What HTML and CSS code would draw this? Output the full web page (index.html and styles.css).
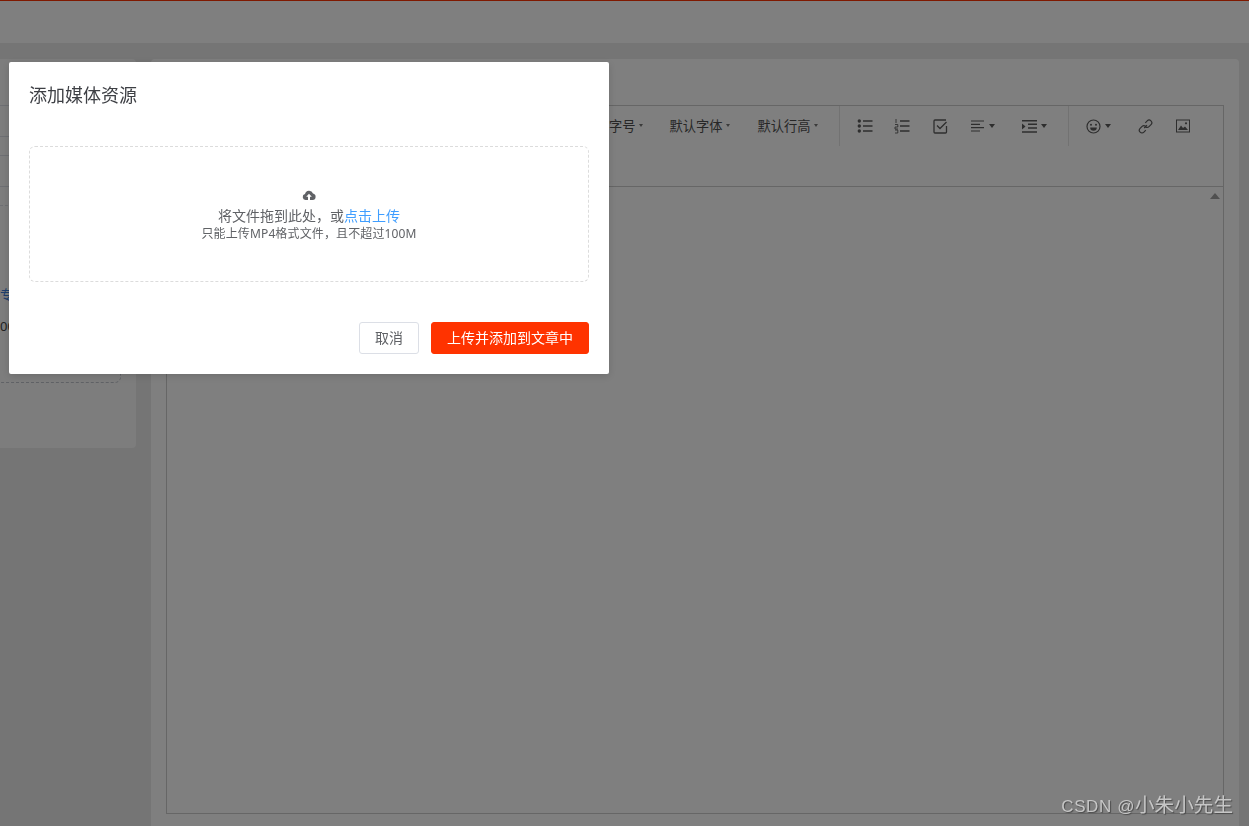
FILE: index.html
```html
<!DOCTYPE html>
<html lang="zh">
<head>
<meta charset="utf-8">
<title>添加媒体资源</title>
<link rel="stylesheet" href="styles.css">
</head>
<body>
<div class="page">
  <header class="topbar"></header>
  <div class="content">
    <aside class="side">
      <div class="field-line line-a"></div>
      <div class="field-line line-b"></div>
      <div class="field-line line-c"></div>
      <div class="field-line line-d"></div>
      <div class="field-dash"></div>
      <div class="side-link">专</div>
      <div class="side-num">00</div>
      <div class="side-drop"></div>
    </aside>
    <main class="main">
      <div class="editor">
        <div class="toolbar">
          <div class="tool-group text-tools">
            <span class="tool-text">字号<i class="caret-s"></i></span>
            <span class="tool-text">默认字体<i class="caret-s"></i></span>
            <span class="tool-text">默认行高<i class="caret-s"></i></span>
          </div>
          <div class="tool-group list-tools">
            <svg class="ico i-ul" width="16" height="16" viewBox="0 0 16 16"><circle cx="2.300" cy="3" r="1.700" fill="#5c5c5c"/><circle cx="2.300" cy="8" r="1.700" fill="#5c5c5c"/><circle cx="2.300" cy="13" r="1.700" fill="#5c5c5c"/><path d="M6 3h9.500M6 8h9.500M6 13h9.500" stroke="#5c5c5c" stroke-width="1.600"/></svg>
            <svg class="ico i-ol" width="16" height="16" viewBox="0 0 16 16"><path d="M6 3h9.500M6 8h9.500M6 13h9.500" stroke="#5c5c5c" stroke-width="1.500"/><path d="M2 1v4M1 6.500h2.800V9H1v2h3M1 12h2.800v3H1" fill="none" stroke="#5c5c5c" stroke-width=".9"/></svg>
            <svg class="ico i-check" width="15" height="15" viewBox="0 0 15 15"><path d="M13.500 7V13a1 1 0 0 1-1 1H2a1 1 0 0 1-1-1V2a1 1 0 0 1 1-1h11" fill="none" stroke="#5c5c5c" stroke-width="1.300"/><path d="M4 6.500l3 3 6.500-6.500" fill="none" stroke="#5c5c5c" stroke-width="1.300"/></svg>
            <span class="ico-wrap i-align"><svg width="14" height="12" viewBox="0 0 14 12"><path d="M0 1h13M0 4.300h9M0 7.600h13M0 11h9" stroke="#5c5c5c" stroke-width="1.200"/></svg><i class="caret"></i></span>
            <span class="ico-wrap i-indent"><svg width="15" height="13" viewBox="0 0 15 13"><path d="M0 .8h15M6 4.300h9M6 8h9M0 12h15" stroke="#5c5c5c" stroke-width="1.500"/><path d="M0 3.500l3.500 3-3.500 3z" fill="#5c5c5c"/></svg><i class="caret"></i></span>
          </div>
          <div class="tool-group media-tools">
            <span class="ico-wrap i-emoji"><svg width="15" height="15" viewBox="0 0 15 15"><circle cx="7.500" cy="7.500" r="6.500" fill="none" stroke="#5c5c5c" stroke-width="1.200"/><circle cx="5" cy="5.800" r="1" fill="#5c5c5c"/><circle cx="10" cy="5.800" r="1" fill="#5c5c5c"/><path d="M4.200 8.500h6.600a3.300 3.300 0 0 1-6.600 0z" fill="#5c5c5c"/></svg><i class="caret"></i></span>
            <svg class="ico i-link" width="15" height="15" viewBox="0 0 15 15"><path d="M6.200 9L9 6.200M7.300 3.800l1.900-1.900a2.600 2.600 0 0 1 3.800 3.700l-2 2a2.600 2.600 0 0 1-3.300.3M7.800 11.200l-1.900 1.900a2.600 2.600 0 0 1-3.800-3.700l2-2a2.600 2.600 0 0 1 3.300-.3" fill="none" stroke="#5c5c5c" stroke-width="1.200"/></svg>
            <svg class="ico i-img" width="14" height="14" viewBox="0 0 14 14"><rect x=".5" y="1" width="13" height="12" fill="none" stroke="#5c5c5c"/><path d="M2 11l3-4.500 2 2.500 2-1.500 3 3.500z" fill="#5c5c5c"/><circle cx="10" cy="4.300" r="1.100" fill="#5c5c5c"/></svg>
          </div>
        </div>
        <div class="edit-area"><i class="scroll-up"></i></div>
      </div>
    </main>
  </div>
</div>
<div class="overlay"></div>
<section class="dialog">
  <h2 class="dialog-title">添加媒体资源</h2>
  <div class="dropzone">
    <svg class="cloud" width="14" height="12" viewBox="0 0 14 12"><path d="M3.500 11A3 3 0 0 1 3 5.100 4.200 4.200 0 0 1 11 4.500 3.300 3.300 0 0 1 10.700 11H8V7.800h1.800L7 4.800 4.200 7.800H6V11z" fill="#606266"/></svg>
    <div class="drop-text">将文件拖到此处，或<em>点击上传</em></div>
    <div class="drop-tip">只能上传MP4格式文件，且不超过100M</div>
  </div>
  <div class="dialog-footer">
    <button class="btn btn-cancel">取消</button>
    <button class="btn btn-primary">上传并添加到文章中</button>
  </div>
</section>
<div class="watermark"><span class="wm-latin">CSDN @</span>小朱小先生</div>
</body>
</html>
```
FILE: styles.css
```css
* { box-sizing: border-box; }
html, body { margin: 0; height: 100%; overflow: hidden; }
body { font-family: "Noto Sans", "Noto Sans CJK SC", sans-serif; color: #303133; background: #eeeeee; }
.page { height: 826px; display: flex; flex-direction: column; background: #eaeaea; position: relative; }
.topbar { height: 43px; flex: none; background: #ffffff; border-top: 1px solid #ff3300; }
.content { flex: 1; display: flex; align-items: flex-start; padding-top: 16px; gap: 15px; }
.side { width: 136px; height: 389px; background: #fafafa; border-radius: 0 4px 4px 0; position: relative; flex: none; }
.field-line { position: absolute; left: 0; right: 0; height: 1px; background: #dcdfe6; }
.line-a { top: 46px; }
.line-b { top: 77px; }
.line-c { top: 96px; }
.line-d { top: 127px; }
.field-dash { position: absolute; left: 0; right: 0; top: 146px; border-top: 1px dashed #dcdfe6; }
.side-link { position: absolute; left: 0; top: 226px; font-size: 13px; line-height: 18px; color: #3d7ddb; }
.side-num { position: absolute; left: 0; top: 258px; font-size: 13px; line-height: 18px; color: #444; }
.side-drop { position: absolute; left: -10px; top: 300px; width: 131px; height: 24px; border: 1px dashed #c0c4cc; border-top: 0; border-radius: 0 0 6px 6px; }
.main { width: 1088px; height: 767px; background: #ffffff; border-radius: 4px 4px 0 0; padding: 46px 15px 12px; flex: none; display: flex; }
.editor { flex: 1; border: 1px solid #cccccc; display: flex; flex-direction: column; }
.toolbar { height: 81px; border-bottom: 1px solid #cccccc; display: flex; align-items: flex-start; flex: none; }
.tool-group { height: 40px; display: flex; align-items: center; position: relative; }
.text-tools { width: 673px; padding-left: 442px; border-right: 1px solid #e5e5e5; font-size: 13.25px; color: #4f4f4f; }
.tool-text { display: inline-flex; align-items: center; margin-right: 27px; white-space: nowrap; line-height: 18px; padding-bottom: 1px; }
.tool-text:nth-child(2) { margin-right: 28px; }
.caret-s { width: 0; height: 0; border: 2px solid transparent; border-top: 3px solid #777; border-bottom: 0; margin-left: 3px; }
.caret { width: 0; height: 0; border: 3.500px solid transparent; border-top: 4px solid #5c5c5c; border-bottom: 0; margin-left: 4px; }
.ico, .ico-wrap { flex: none; display: inline-flex; align-items: center; }
.list-tools { width: 229px; padding-left: 17px; border-right: 1px solid #e5e5e5; }
.i-ol { margin-left: 21px; }
.i-check { margin-left: 23px; }
.i-align { margin-left: 23px; }
.i-indent { margin-left: 27px; }
.media-tools { padding-left: 17px; }
.i-link { margin-left: 27px; }
.i-img { margin-left: 23px; }
.edit-area { flex: 1; position: relative; }
.scroll-up { position: absolute; right: 3px; top: 6px; width: 0; height: 0; border: 5px solid transparent; border-bottom: 6px solid #a0a0a0; border-top: 0; }
.overlay { position: fixed; inset: 0; background: rgba(0, 0, 0, .5); }
.dialog { position: fixed; left: 9px; top: 62px; width: 600px; height: 312px; background: #fff; border-radius: 2px; box-shadow: 0 2px 8px rgba(0, 0, 0, .15); padding: 20px; display: flex; flex-direction: column; }
.dialog-title { margin: 0; font-size: 18px; line-height: 26px; font-weight: 400; color: #3d3f44; height: 24px; }
.dropzone { margin-top: 40px; height: 136px; border: 1px dashed #dcdcdc; border-radius: 6px; display: flex; flex-direction: column; align-items: center; padding-top: 42px; color: #606266; }
.cloud { display: block; }
.drop-text { font-size: 14px; line-height: 18px; margin-top: 6px; }
.drop-text em { font-style: normal; color: #409eff; }
.drop-tip { font-size: 12px; line-height: 18px; letter-spacing: .13px; }
.dialog-footer { margin-top: 40px; display: flex; justify-content: flex-end; gap: 12px; }
.btn { height: 32px; border-radius: 3px; font: inherit; font-size: 14px; line-height: 20px; padding: 0; }
.btn-cancel { width: 60px; background: #fff; border: 1px solid #dcdfe6; color: #606266; }
.btn-primary { width: 158px; background: #ff3300; border: 1px solid #ff3300; color: #fff; }
.watermark { position: fixed; right: 16px; bottom: 6px; font-size: 19.6px; line-height: 26px; color: #c6c6c6; text-shadow: 1px 1px 1px #4a4a4a; white-space: nowrap; }
.wm-latin { font-family: "Liberation Sans", sans-serif; font-size: 17px; letter-spacing: .6px; }
```
